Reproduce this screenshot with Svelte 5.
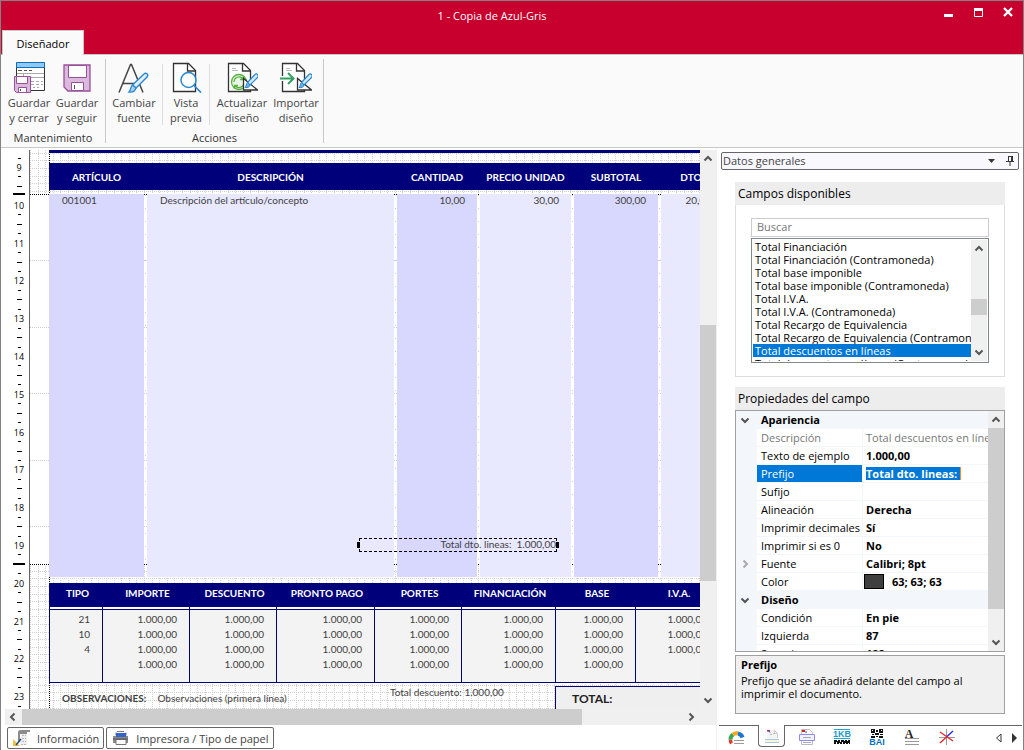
<script>
  const columns = [
    { title: 'ARTÍCULO', value: '001001', width: 95, align: 'left' },
    { title: 'DESCRIPCIÓN', value: 'Descripción del artículo/concepto', width: 247, align: 'left' },
    { title: 'CANTIDAD', value: '10,00', width: 80, align: 'right' },
    { title: 'PRECIO UNIDAD', value: '30,00', width: 91, align: 'right' },
    { title: 'SUBTOTAL', value: '300,00', width: 84, align: 'right' },
    { title: 'DTO.', value: '20,00', width: 62, align: 'right' }
  ];

  const totals = [
    { title: 'TIPO', width: 53, rows: ['21', '10', '4', ''] },
    { title: 'IMPORTE', width: 87, rows: ['1.000,00', '1.000,00', '1.000,00', '1.000,00'] },
    { title: 'DESCUENTO', width: 87, rows: ['1.000,00', '1.000,00', '1.000,00', '1.000,00'] },
    { title: 'PRONTO PAGO', width: 98, rows: ['1.000,00', '1.000,00', '1.000,00', '1.000,00'] },
    { title: 'PORTES', width: 87, rows: ['1.000,00', '1.000,00', '1.000,00', '1.000,00'] },
    { title: 'FINANCIACIÓN', width: 94, rows: ['1.000,00', '1.000,00', '1.000,00', '1.000,00'] },
    { title: 'BASE', width: 80, rows: ['1.000,00', '1.000,00', '1.000,00', '1.000,00'] },
    { title: 'I.V.A.', width: 84, rows: ['1.000,00', '1.000,00', '1.000,00', ''] }
  ];

  const fields = [
    'Total Financiación',
    'Total Financiación (Contramoneda)',
    'Total base imponible',
    'Total base imponible (Contramoneda)',
    'Total I.V.A.',
    'Total I.V.A. (Contramoneda)',
    'Total Recargo de Equivalencia',
    'Total Recargo de Equivalencia (Contramoneda)',
    'Total descuentos en líneas',
    'Total descuentos en líneas (Contramoneda)'
  ];
  let selectedField = $state('Total descuentos en líneas');

  const properties = [
    { group: 'Apariencia' },
    { name: 'Descripción', value: 'Total descuentos en líneas', muted: true },
    { name: 'Texto de ejemplo', value: '1.000,00' },
    { name: 'Prefijo', value: 'Total dto. lineas: ', editing: true },
    { name: 'Sufijo', value: '' },
    { name: 'Alineación', value: 'Derecha' },
    { name: 'Imprimir decimales', value: 'Sí' },
    { name: 'Imprimir si es 0', value: 'No' },
    { name: 'Fuente', value: 'Calibri; 8pt', expandable: true },
    { name: 'Color', value: '63; 63; 63', swatch: true },
    { group: 'Diseño' },
    { name: 'Condición', value: 'En pie' },
    { name: 'Izquierda', value: '87' },
    { name: 'Superior', value: '188' }
  ];

  // Ruler geometry: one centimetre is 37.8 px, the 9 cm label sits 17 px down.
  const cm = 37.8;
  const yOf = (v) => Math.round(17 + (v - 9) * cm);
  const labels = Array.from({ length: 15 }, (_, i) => 9 + i);
  const ticks = [];
  for (let v = 8.75; v < 23.4; v += 0.25) {
    const y = yOf(v);
    if (v % 1 !== 0 && Math.abs(y - 44) > 3 && Math.abs(y - 414) > 3) ticks.push({ y, half: v % 1 === 0.5 });
  }
</script>

{#snippet floppy()}
  <path d="M1 1h26v26H5l-4-4z" fill="#dbb9dc" stroke="#9b4f9b" stroke-width="1.300" />
  <path d="M5.500 1.500h18v12h-18z" fill="#fff" stroke="#9b4f9b" />
  <path d="M8.500 26.500v-8h12v8z" fill="#fff" stroke="#9b4f9b" />
  <path d="M11.500 21v4" stroke="#555" />
{/snippet}

{#snippet sheet()}
  <path d="M4.500 2.500h15l7 7v21h-22z" fill="#fff" stroke="#333" stroke-width="1.300" />
  <path d="M18.500 2.500v7.500h8" fill="none" stroke="#333" stroke-width="1.300" />
{/snippet}

{#snippet squareAndBrush()}
  <path d="M17.500 17.500v11.500h14z" fill="#fff" stroke="#333" stroke-width="1.300" />
  <path d="M31.500 13.500c1.500 1.500.5 2.500 0 3l-7.500 7.500-2.500-2.500 7-7.500c1-1 2-1.500 3-.5z" fill="#d3e9fa" stroke="#2888cf" stroke-width="1.200" />
  <path d="M24 24c0 2-2.500 3-5 2.500 1.500-1 1-4 2.500-5z" fill="#6cb1e6" stroke="#2888cf" />
{/snippet}

{#snippet chevron(dir)}
  <svg class="chev {dir}" viewBox="0 0 10 10" width="10" height="10" aria-hidden="true"><path d="M1.500 6.500L5 3l3.500 3.500" /></svg>
{/snippet}

<div class="window">
  <header class="titlebar">
    <h1>1 - Copia de Azul-Gris</h1>
    <button class="tab">Diseñador</button>
    <div class="controls">
      <button aria-label="Minimizar"><svg viewBox="0 0 10 10" width="10" height="10"><path d="M1 7h9v3H1z" fill="#fff" /></svg></button>
      <button aria-label="Maximizar"><svg viewBox="0 0 10 10" width="10" height="10"><path d="M1.500 1.500h8v8h-8z" fill="none" stroke="#fff" /><path d="M1 1h9v3H1z" fill="#fff" /></svg></button>
      <button aria-label="Cerrar"><svg viewBox="0 0 10 10" width="10" height="10"><path d="M1 1l8 8M9 1L1 9" stroke="#fff" stroke-width="2.400" /></svg></button>
    </div>
  </header>

  <nav class="ribbon" aria-label="Diseñador">
    <section class="group first">
      <div class="actions">
        <button class="w48">
          <svg viewBox="0 0 32 32" width="32" height="32">
            <path d="M3.500 2v27.500h28V2z" fill="#fff" stroke="#333" />
            <path d="M3.500 1.500h28v5h-28z" fill="#92c9f2" stroke="#0a6fbd" />
            <path d="M5 9.500h4M11 9.500h3M16 9.500h3" stroke="#555" fill="none" />
            <path d="M4 12.500h27M10.500 12v4M10 16.500h21M18 20.500h3M23 20.500h3M28 20.500h2M18 23.500h3M23 23.500h3M28 23.500h2M20 26.500h2M24 26.500h2" stroke="#aaa" fill="none" />
            <path d="M1.500 15.500h16v16h-14l-2-2z" fill="#dbb9dc" stroke="#9b4f9b" />
            <path d="M3.500 15.500h11v7h-11zM5.500 31.500v-5h8v5z" fill="#fff" stroke="#9b4f9b" />
            <path d="M7.500 28v2" stroke="#555" />
          </svg>
          <span>Guardar<br />y cerrar</span>
        </button>
        <button class="w48">
          <svg viewBox="0 0 32 32" width="32" height="32"><g transform="translate(2 3)">{@render floppy()}</g></svg>
          <span>Guardar<br />y seguir</span>
        </button>
      </div>
      <h2>Mantenimiento</h2>
    </section>
    <section class="group">
      <div class="actions">
        <button class="w50">
          <svg viewBox="0 0 32 32" width="32" height="32">
            <path d="M1 31.500L12.500 3.500h1L25 31.500M5 22.500h16" fill="none" stroke="#444" stroke-width="1.500" />
            <path d="M26 13c2-2 5 .5 3 3L18 27l-3.500-3z" fill="#e1f0fc" stroke="#2888cf" stroke-width="1.400" />
            <path d="M18 27c-1 3-4 4.500-7 4 2-1.500 1-5 3.500-7z" fill="#a6d2f3" stroke="#2888cf" stroke-width="1.300" />
          </svg>
          <span>Cambiar<br />fuente</span>
        </button>
        <i class="sep"></i>
        <button class="w40">
          <svg viewBox="0 0 32 32" width="32" height="32">
            <g transform="translate(-1 0)">{@render sheet()}</g>
            <circle cx="18.500" cy="19" r="7.500" fill="#fff" stroke="#2888cf" stroke-width="1.500" />
            <path d="M24 24.500l7 7" stroke="#2888cf" stroke-width="1.700" />
          </svg>
          <span>Vista<br />previa</span>
        </button>
        <i class="sep"></i>
        <button class="w58">
          <svg viewBox="0 0 32 32" width="32" height="32">
            <g transform="translate(-2 0)">{@render sheet()}</g>
            <path d="M6 7.500h4M6 9.500h6" stroke="#bbb" />
            <circle cx="13" cy="21" r="8" fill="#fff" />
            <circle cx="13" cy="21" r="7.500" fill="#eaf7e6" stroke="#58b040" stroke-width="1.300" />
            <path d="M8 21a5 5 0 0 1 9-3M18 21a5 5 0 0 1-9 3.500M17.500 15v3.500H14M8.500 28v-3.500H12" fill="none" stroke="#58b040" stroke-width="1.300" />
            {@render squareAndBrush()}
          </svg>
          <span>Actualizar<br />diseño</span>
        </button>
        <button class="w48">
          <svg viewBox="0 0 32 32" width="32" height="32">
            <g transform="translate(-2 0)">{@render sheet()}</g>
            <path d="M6 7.500h4M6 9.500h6" stroke="#bbb" />
            <path d="M0 17.500h14" stroke="#fafafa" stroke-width="5" />
            <path d="M0 17.500h13M8 12l5.500 5.500L8 23" fill="none" stroke="#33a261" stroke-width="2" />
            {@render squareAndBrush()}
          </svg>
          <span>Importar<br />diseño</span>
        </button>
      </div>
      <h2>Acciones</h2>
    </section>
  </nav>

  <div class="body">
    <main class="designer">
      <div class="sheet-area">
        <svg class="ruler" width="29" height="100%" aria-label="Regla vertical">
          {#each ticks as t}
            <rect x={t.half ? 16 : 17} y={t.y} width={t.half ? 5 : 3} height="1" />
          {/each}
          <rect x="12" y="43" width="12" height="2" />
          <rect x="12" y="413" width="12" height="2" />
          {#each labels as n}
            <text x="18" y={yOf(n) + 4} text-anchor="middle">{n}</text>
          {/each}
        </svg>

        <div class="canvas">
          <svg class="gridlines" width="100%" height="100%" aria-hidden="true">
            <defs>
              <pattern id="dots" width="38" height="38" patternUnits="userSpaceOnUse">
                <path d="M0 10.500h38M0 18.500h38M0 26.500h38M0 33.500h38M0 3.500h38M.5 0v38M8.500 0v38M15.500 0v38M23.500 0v38M30.500 0v38" stroke="#d0d0d0" stroke-dasharray="1 1" />
              </pattern>
            </defs>
            <rect width="100%" height="44" fill="url(#dots)" />
            <rect y="415" width="100%" height="100%" fill="url(#dots)" />
            <path d="M0 110.500h700M0 177.500h700M0 243.500h700M0 310.500h700M0 376.500h700" stroke="#cfcfcf" stroke-dasharray="1 1" />
            <path d="M115.500 45v369M365.500 45v369M448.500 45v369M542.500 45v369M629.500 45v369" stroke="#cfcfcf" stroke-dasharray="1 12" />
            <path d="M0 44.500h700M0 414.500h700M19.500 0v44M19.500 415v300" stroke="#000" stroke-dasharray="1 1" />
          </svg>

          <div class="document">
            <div class="rule"></div>
            <div class="band">
              {#each columns as c}<b style:width="{c.width}px">{c.title}</b>{/each}
            </div>
            <div class="detail">
              {#each columns as c}<div class={c.align} style:width="{c.width}px">{c.value}</div>{/each}
            </div>
            <table class="totals">
              <colgroup>{#each totals as t}<col style:width="{t.width}px" />{/each}</colgroup>
              <thead><tr>{#each totals as t}<th>{t.title}</th>{/each}</tr></thead>
              <tbody>
                <tr class="join">{#each totals as _}<td></td>{/each}</tr>
                {#each [0, 1, 2, 3] as r}
                  <tr>{#each totals as t}<td>{t.rows[r]}</td>{/each}</tr>
                {/each}
              </tbody>
            </table>
            <footer class="docfoot">
              <p class="notes"><b>OBSERVACIONES:</b><span>Observaciones (primera línea)</span></p>
              <p class="discount">Total descuento: 1.000,00</p>
              <p class="total">TOTAL:</p>
            </footer>
          </div>

          <div class="picked">Total dto. lineas: &nbsp;1.000,00</div>
        </div>

        <div class="vbar">
          {@render chevron('up')}
          <i class="space top"></i><i class="thumb"></i><i class="space"></i>
          {@render chevron('down')}
        </div>
      </div>
      <div class="hbar">
        {@render chevron('left')}
        <i class="thumb"></i>
        {@render chevron('right')}
      </div>
      <div class="pages">
        <button>
          <svg viewBox="0 0 18 16" width="18" height="16">
            <path d="M5 5V2q0-2 3-2h9v2h-3v2H7v8H5z" fill="#8b8b8b" /><path d="M8 4h6v11H7z" fill="#eee" />
            <path d="M9 5.500h4M9 8.500h4M9 11.500h4M8 14.500h5" stroke="#bbb" stroke-dasharray="2 1" />
            <path d="M0 9v7h7z" fill="#f3c04c" /><path d="M8 9l-5 6" stroke="#1d4f7d" stroke-width="1.500" />
          </svg>
          Información
        </button>
        <button>
          <svg viewBox="0 0 18 16" width="18" height="16">
            <path d="M5 1.500h7M14 2.500v3M4 2.500v3" stroke="#777" /><path d="M1 6h15v7H1z" fill="#8a8a8a" />
            <path d="M4 3h10v4H4z" fill="#3463c9" /><path d="M4 9.500h10v5H4z" fill="#fff" stroke="#777" /><path d="M1 9h15" stroke="#555" />
          </svg>
          Impresora / Tipo de papel
        </button>
      </div>
    </main>

    <aside class="panel">
      <div class="picker">
        <select aria-label="Sección"><option>Datos generales</option></select>
        <svg viewBox="0 0 30 12" width="30" height="12" aria-hidden="true">
          <path d="M0 4h7L3.500 8z" fill="#333" />
          <path d="M20.500 1v5.500M20 1.500h5M18 6.500h8M22 7v4" fill="none" stroke="#333" /><path d="M23 1h2v6h-2z" fill="#333" />
        </svg>
      </div>

      <section class="card">
        <h2>Campos disponibles</h2>
        <div class="fieldbox">
          <input type="text" placeholder="Buscar" aria-label="Buscar" />
          <div class="listbox">
            <ul role="listbox" aria-label="Campos disponibles">
              {#each fields as f}
                <li role="option" aria-selected={f === selectedField}>
                  <button tabindex="-1" onclick={() => (selectedField = f)}>{f}</button>
                </li>
              {/each}
            </ul>
            <div class="vbar listbar">
              {@render chevron('up')}
              <i class="space top"></i><i class="thumb"></i><i class="space"></i>
              {@render chevron('down')}
            </div>
          </div>
        </div>
      </section>

      <section class="card">
        <h2>Propiedades del campo</h2>
        <div class="props">
          <div class="propscroll">
            <table>
              <colgroup><col class="c0" /><col class="c1" /><col /></colgroup>
              <tbody>
                {#each properties as p}
                  {#if p.group}
                    <tr class="section"><td>{@render chevron('down')}</td><th colspan="2">{p.group}</th></tr>
                  {:else}
                    <tr class:muted={p.muted} class:editing={p.editing}>
                      <td>{#if p.expandable}{@render chevron('right faint')}{/if}</td>
                      <th>{p.name}</th>
                      <td>
                        {#if p.editing}<input type="text" aria-label={p.name} value={p.value} />
                        {:else}{#if p.swatch}<i class="swatch"></i>{/if}{p.value}{/if}
                      </td>
                    </tr>
                  {/if}
                {/each}
              </tbody>
            </table>
          </div>
          <div class="vbar propbar">
            {@render chevron('up')}
            <i class="thumb"></i><i class="space"></i>
            {@render chevron('down')}
          </div>
        </div>
      </section>

      <div class="help">
        <h3>Prefijo</h3>
        <p>Prefijo que se añadirá delante del campo al imprimir el documento.</p>
      </div>

      <div class="tools">
        <button aria-label="Colores">
          <svg viewBox="0 0 18 16" width="18" height="16">
            <path d="M3.500 14.500a6 6 0 0 1-1-4" stroke="#e53a2a" stroke-width="3.500" fill="none" />
            <path d="M2.500 10.500a6 6 0 0 1 2.500-5" stroke="#35a853" stroke-width="4" fill="none" />
            <path d="M5 5.500a6 6 0 0 1 5-1" stroke="#f6a81c" stroke-width="4" fill="none" />
            <path d="M10 4.500a6 6 0 0 1 4.500 4" stroke="#1976d2" stroke-width="4" fill="none" />
            <path d="M6 11.500h10M6 14.500h10" stroke="#999" />
          </svg>
        </button>
        <button class="active" aria-label="Datos generales">
          <svg viewBox="0 0 18 16" width="18" height="16">
            <path d="M5 2h7l3 3v7H4z" fill="#f4f4f4" /><path d="M11.500 2.500l3 3h-3zM14.500 6v4" stroke="#cdcdcd" fill="none" />
            <path d="M4 2h3v1.500H4z" fill="#e02020" /><path d="M5 2l2 2.500" stroke="#2447c8" />
            <path d="M7 6.500h2M10 5.500h2" stroke="#bbb" /><path d="M2 11h14v3H2z" fill="#f7f4dd" /><path d="M2 11.500h14M2 14.500h14" stroke="#a9c6e4" />
          </svg>
        </button>
        <button aria-label="Cuerpo">
          <svg viewBox="0 0 18 16" width="18" height="16">
            <path d="M3.500.500h8l3 3v12h-11z" fill="#fff" stroke="#bbb" /><path d="M4 2h3" stroke="#e02020" stroke-width="2" /><path d="M7 3h2" stroke="#2447c8" />
            <path d="M1.500 5.500h15v6h-15z" fill="#f0f0ff" stroke="#8d8df0" /><path d="M5 8.500h8M5 13.500h8" stroke="#aaa" />
          </svg>
        </button>
        <button aria-label="Textos">
          <svg viewBox="0 0 18 16" width="18" height="16">
            <path d="M1 .5h16M1 9.500h16" stroke="#2aa4d8" /><text x="9" y="8" text-anchor="middle" class="kb">1KB</text>
            <path d="M1 11h3v1h1v-1h2v2h1v-2h3v1h1v-1h2v1h1v-1h2v4h-1v-1h-1v1h-2v-1h-1v1h-2v-2H9v2H7v-1H6v1H4v-2H3v2H1z" fill="#111" />
          </svg>
        </button>
        <button aria-label="Código QR">
          <svg viewBox="0 0 18 16" width="18" height="16">
            <path d="M3 0h4v4H3zM11 0h4v4h-4zM8 1h2v2H8zM4 5h2v1H4zM7 4h4v2H7zM12 5h3v1h-3zM3 7h4v2H3zM8 7h2v1H8zM11 7h4v2h-4z" fill="#111" /><path d="M4 1h1v1H4zM13 1h1v1h-1z" fill="#fff" />
            <text x="9" y="16" text-anchor="middle" class="bai">BAI</text>
          </svg>
        </button>
        <button aria-label="Fuente">
          <svg viewBox="0 0 18 16" width="18" height="16">
            <text x="6" y="9" text-anchor="middle" class="serif">A</text><path d="M2 9.500h14M2 12.500h14M2 15.500h14" stroke="#999" />
          </svg>
        </button>
        <button aria-label="Líneas">
          <svg viewBox="0 0 18 16" width="18" height="16">
            <path d="M1 8.500h16M8.500 0v16" stroke="#999" />
            <path d="M2 3l6.500 4.500M8.500 8L2 14" stroke="#f02020" stroke-width="1.300" />
            <path d="M15 2L8.500 8" stroke="#2020e8" stroke-width="1.300" />
            <path d="M8.500 7.500L15 12" stroke="#f02020" stroke-width="1.300" />
          </svg>
        </button>
        <span class="pager">
          <button aria-label="Anterior"><svg viewBox="0 0 8 10" width="8" height="10"><path d="M6 1v8L1.500 5z" fill="#fff" stroke="#333" /></svg></button>
          <button aria-label="Siguiente"><svg viewBox="0 0 8 10" width="8" height="10"><path d="M2 0v10l5-5z" fill="#333" /></svg></button>
        </span>
      </div>
    </aside>
  </div>
</div>

<style>
  :global(body) { margin: 0; overflow: hidden; }
  .window, .window * { box-sizing: border-box; }
  .window { display: flex; flex-direction: column; height: 100vh; border: 1px solid #828282; border-bottom: 0; background: #fff; font-family: "Open Sans", "Noto Sans", sans-serif; font-size: 11px; color: #000; }
  button { font: inherit; color: inherit; background: none; border: 0; padding: 0; margin: 0; }
  h1, h2, h3, p, ul { margin: 0; padding: 0; font-weight: 400; }
  svg { display: block; flex: none; }

  .titlebar { display: grid; grid-template-columns: 120px 1fr 120px; grid-template-rows: 29px 24px; background: #c8002d; color: #fff; }
  h1 { grid-column: 2; grid-row: 1; text-align: center; font-size: 11px; line-height: 29px; padding-right: 40px; }
  .tab { grid-column: 1; grid-row: 2; justify-self: start; width: 82px; margin-left: 1px; margin-bottom: -1px; background: #fafafa; color: #000; border: 1px solid #c9c9c9; border-bottom: 0; z-index: 1; }
  .controls { grid-column: 3; grid-row: 1; display: flex; justify-content: flex-end; gap: 20px; padding: 6px 10px 0 0; }
  .controls button { height: 10px; }

  .ribbon { display: flex; height: 94px; background: #fafafa; border-top: 1px solid #c9c9c9; border-bottom: 1px solid #c9c9c9; color: #444; }
  .group { display: flex; flex-direction: column; margin: 4px 0; border-right: 1px solid #c9c9c9; padding: 0 3px; }
  .group.first { padding: 0 4px; }
  .group h2 { margin-top: auto; text-align: center; font-size: 11px; line-height: 10px; color: #333; }
  .actions { display: flex; padding-top: 2px; }
  .actions button { display: flex; flex-direction: column; align-items: center; line-height: 15px; white-space: nowrap; gap: 2px; }
  .w40 { width: 40px; }
  .w48 { width: 48px; }
  .w50 { width: 50px; }
  .w58 { width: 60px; }
  .sep { width: 1px; margin: 3px 3px 0; background: #ddd; }
  .sep:nth-of-type(2) { margin-right: 2px; }

  .body { flex: 1; display: flex; min-height: 0; }
  .designer { flex: 1; min-width: 0; display: flex; flex-direction: column; padding-top: 2px; border-right: 1px solid #f0f0f0; }
  .sheet-area { flex: 1; min-height: 0; display: flex; }
  .ruler { border-right: 1px solid #666; font-size: 9px; }
  .canvas { flex: 1; min-width: 0; position: relative; overflow: hidden; font-family: Lato, Carlito, sans-serif; font-size: 10px; color: #3f3f3f; }
  .gridlines { position: absolute; inset: 0; shape-rendering: crispEdges; }
  .document { position: relative; padding-left: 19px; width: 700px; }
  .rule { height: 3px; background: #00007a; }
  .band { display: flex; gap: 3px; margin-top: 10px; height: 27px; line-height: 29px; background: #00007a; color: #fff; text-align: center; }
  .band b { flex: none; white-space: nowrap; }
  .detail { display: flex; gap: 3px; margin-top: 4px; height: 383px; line-height: 12px; }
  .detail div { flex: none; background: #d8d8ff; padding: 0 12px; white-space: nowrap; }
  .detail div:nth-child(even) { background: #e8e8ff; }
  .detail div:last-child { background: #e8e8ff; }
  .detail .left { padding-left: 13px; }
  .right { text-align: right; }

  .totals { margin-top: 6px; width: 670px; table-layout: fixed; border-collapse: separate; border-spacing: 0; }
  .totals th { height: 24px; padding: 0 0 4px 4px; background: #00007a; color: #fff; font-weight: 700; white-space: nowrap; }
  .totals td { height: 15px; line-height: 15px; padding: 0 12px 0 0; text-align: right; background: #f3f3f3; border-left: 1px solid #00007a; }
  .totals .join td { height: 5px; background: linear-gradient(#fff 2px, #00007a 2px, #00007a 3px, #f3f3f3 3px); }
  .totals tr:last-child td { height: 25px; padding-bottom: 10px; border-bottom: 1px solid #00007a; }

  .docfoot { display: grid; grid-template-columns: 328px 178px 1fr; height: 40px; }
  .notes { display: flex; gap: 11px; padding: 8px 0 0 13px; line-height: 15px; white-space: nowrap; }
  .discount { padding: 2px 0 0 13px; line-height: 15px; white-space: nowrap; }
  .total { margin-top: 3px; padding: 3px 16px; border: 1px solid #00007a; background: #efefef; font-size: 12px; font-weight: 700; line-height: 18px; color: #222; }
  .picked { position: absolute; left: 329px; top: 388px; width: 198px; height: 14px; border: 1px dashed #000; text-align: right; line-height: 11px; white-space: nowrap; }
  .picked::before, .picked::after { content: ""; position: absolute; top: 3px; width: 3px; height: 6px; background: #000; }
  .picked::before { left: -3px; }
  .picked::after { right: -3px; }

  .vbar { display: flex; flex-direction: column; align-items: center; width: 16px; background: #f0f0f0; padding: 4px 0; }
  .vbar .thumb { width: 16px; flex: 255; background: #cdcdcd; }
  .vbar .space { flex: 114; }
  .vbar .top { flex: 161; }
  .listbar .thumb { flex: 17; }
  .listbar .space { flex: 32; }
  .listbar .top { flex: 45; }
  .propbar .thumb { flex: 178; margin-top: 3px; }
  .propbar .space { flex: 28; }
  .hbar { display: flex; align-items: center; justify-content: space-between; height: 16px; margin: 0 0 0 4px; padding: 0 20px 0 3px; background: #f0f0f0; }
  .hbar .thumb { height: 16px; flex: 560; margin: 0 104px 0 4px; background: #cdcdcd; }
  .chev path { fill: none; stroke: #555; stroke-width: 2; }
  .down { transform: rotate(180deg); }
  .left.chev { transform: rotate(-90deg); }
  .right.chev { transform: rotate(90deg); }
  .faint path { stroke: #aaa; }

  .pages { display: flex; gap: 2px; height: 25px; padding: 2px 6px 1px; }
  .pages button { display: flex; align-items: center; gap: 6px; padding: 0 4px 0 5px; border: 1px solid #666; border-radius: 2px; color: #444; white-space: nowrap; }

  .panel { width: 306px; display: flex; flex-direction: column; padding: 4px 1px 0 2px; }
  .picker { position: relative; display: flex; align-items: center; margin: 0 3px 0 2px; height: 18px; border: 1px solid #666; border-radius: 2px; background: #f8f8fe; }
  .picker select { appearance: none; flex: 1; border: 0; background: none; padding: 0 1px 2px; font: inherit; color: #444; }
  .card { margin: 12px 17px 0 16px; }
  .card + .card { margin-top: 10px; }
  .card h2 { height: 23px; line-height: 23px; padding-left: 3px; font-size: 12px; background: #ededed; }
  .fieldbox { border: 1px solid #ddd; border-top: 0; padding: 13px 15px; }
  .fieldbox input { display: block; width: 100%; height: 19px; padding: 0 5px 2px; border: 1px solid #ccc; font: inherit; color: #333; }
  .fieldbox input::placeholder { color: #777; opacity: 1; }
  .listbox { display: flex; height: 125px; margin-top: 1px; border: 1px solid #828790; padding: 1px; }
  ul { flex: 1; min-width: 0; overflow: hidden; list-style: none; }
  li { height: 13px; }
  li button { display: block; width: 100%; height: 13px; line-height: 13px; padding-left: 2px; text-align: left; white-space: nowrap; overflow: hidden; }
  li[aria-selected="true"] button { background: #0078d7; color: #fff; }

  .props { display: flex; height: 242px; border: 1px solid #a0a0a0; }
  .propscroll { flex: 1; min-width: 0; overflow: hidden; }
  .propscroll table { width: 100%; table-layout: fixed; border-collapse: separate; border-spacing: 0; }
  .c0 { width: 21px; }
  .c1 { width: 105px; }
  .props td, .props th { height: 18px; line-height: 17px; padding: 0 0 0 4px; text-align: left; white-space: nowrap; overflow: hidden; font-weight: 400; border-bottom: 1px solid #f3f6fb; }
  .props td:first-child { padding-left: 4px; background: #f3f6fb; }
  .props td:last-child { font-weight: 700; border-left: 1px solid #f3f6fb; padding-left: 3px; }
  .props .section th { background: #f3f6fb; font-weight: 700; }
  .props .muted th, .props .muted td { color: #777; font-weight: 400; }
  .props .editing th { background: #0078d7; color: #fff; }
  .props input { display: block; width: 95px; height: 13px; border: 0; border-right: 1px solid #ff8728; padding: 0; background: #0078d7; color: #fff; font: inherit; line-height: 13px; }
  .swatch { display: inline-block; vertical-align: top; width: 20px; height: 15px; margin: 1px 8px 0 -2px; background: #3f3f3f; border: 1px solid #000; }

  .help { flex: 0 0 59px; margin: 3px 17px 0 16px; padding: 1px 5px; border: 1px solid #a0a0a0; background: #f0f0f0; line-height: 13px; }
  .help h3 { font-size: 11px; line-height: 15px; font-weight: 700; margin-bottom: 2px; }

  .tools { display: flex; height: 25px; margin-top: auto; border-top: 1px solid #666; }
  .tools > button { width: 27px; height: 22px; margin: 0 4px; display: grid; place-items: center; }
  .tools > button.active { margin-top: -1px; background: #fff; border: 1px solid #666; border-top: 0; border-radius: 0 0 4px 4px; }
  .pager { display: flex; gap: 7px; margin-left: auto; margin-right: 4px; align-items: center; }
  .kb { font: 700 9px "Liberation Sans", sans-serif; fill: #189ad0; }
  .bai { font: 700 9px "Liberation Sans", sans-serif; fill: #0672c0; }
  .serif { font: 700 12px "Liberation Serif", serif; fill: #222; }
</style>
